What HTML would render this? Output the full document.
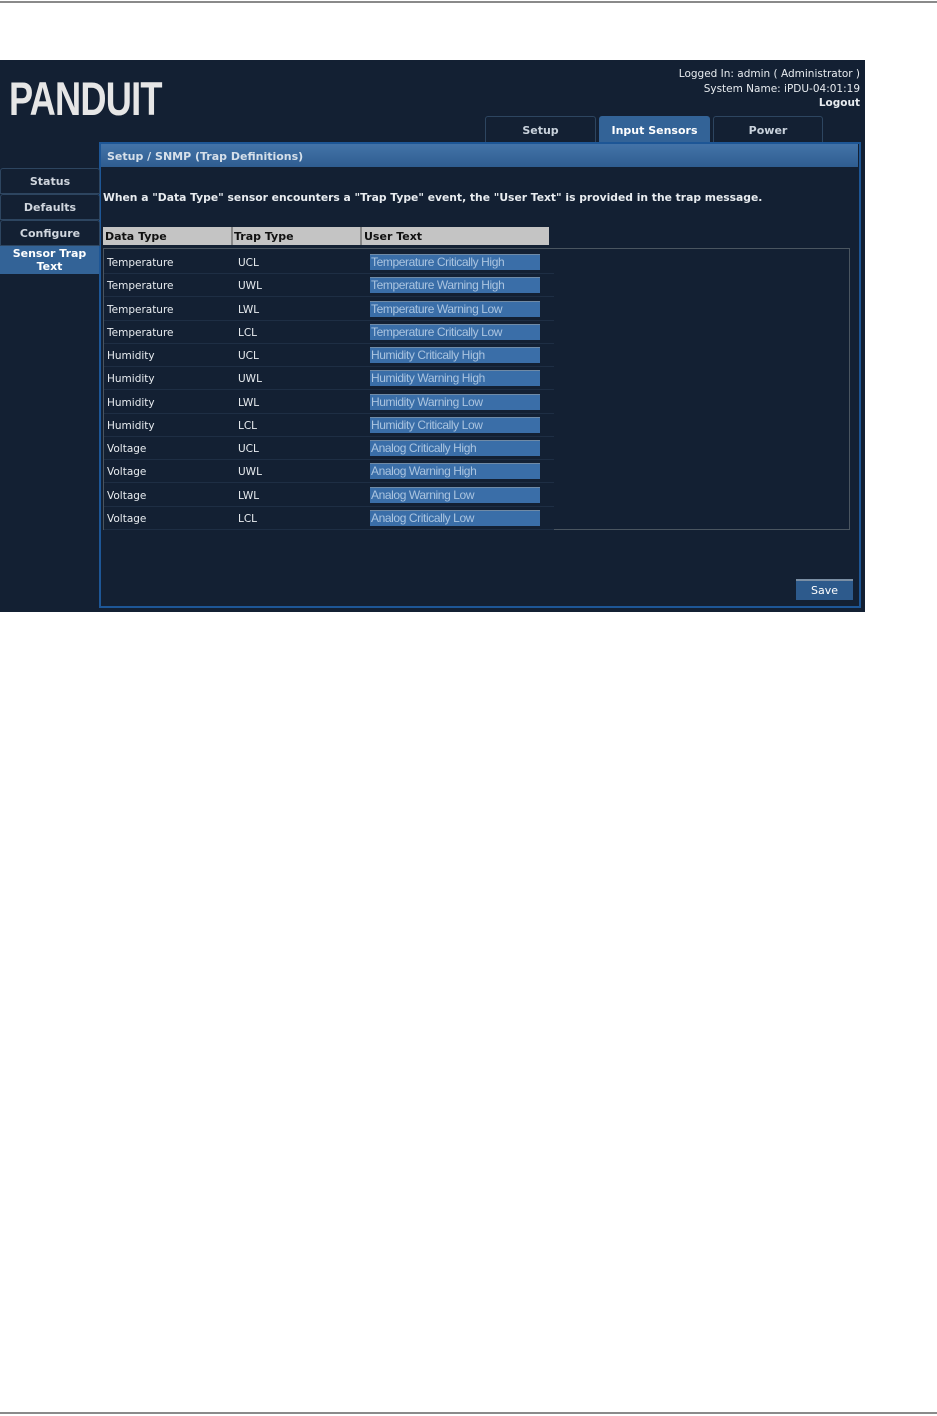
<!DOCTYPE html>
<html><head><style>
body{margin:0;width:937px;height:1416px;background:#fff;position:relative;font-family:"DejaVu Sans","Liberation Sans",sans-serif;overflow:hidden}
.a{position:absolute}
#app{left:0;top:60px;width:865px;height:552px;background:#132033}
.tab{position:absolute;top:116px;height:25px;border:1px solid #2d4560;border-radius:3px 3px 0 0;background:#132033;color:#c9d2dc;font-size:11px;font-weight:bold;text-align:center;line-height:27px}
.nav{position:absolute;left:0;width:98px;height:24px;border:1px solid #2d4560;border-radius:3px 3px 0 0;background:#132033;color:#d0d6de;font-size:11px;font-weight:bold;text-align:center;line-height:25px}
.row{position:absolute;left:104px;width:450px;height:23px;border-bottom:1px solid #1e2e44;font-size:10.5px;color:#e8ecf0;line-height:27px}
.row span{position:absolute}
.inp{position:absolute;left:266px;top:4px;width:169px;height:15px;background:#3a6ea8;border-top:1px solid #6f8aa6;color:#aac4e0;font-family:"Liberation Sans",sans-serif;font-size:12px;line-height:15px;padding-left:1px;letter-spacing:-0.4px}
</style></head><body>
<div class="a" style="left:0;top:1px;width:937px;height:2px;background:#8a8a8a"></div>
<div class="a" style="left:0;top:1412px;width:937px;height:2px;background:#8a8a8a"></div>
<div id="app" class="a"></div>
<div class="a" style="left:9px;top:75px;color:#e6e6e6;font-family:'Liberation Sans',sans-serif;font-weight:bold;font-size:47px;line-height:47px;letter-spacing:-1px;transform:scaleX(0.77);transform-origin:left">PANDUIT</div>
<div class="a" style="right:77px;top:67px;text-align:right;color:#e8ecf0;font-size:10.5px;line-height:14.5px">Logged In: admin ( Administrator )<br>System Name: iPDU-04:01:19<br><b>Logout</b></div>
<div class="tab" style="left:485px;width:109px">Setup</div>
<div class="tab" style="left:599px;width:109px;background:#336397;border-color:#336397;color:#fff">Input Sensors</div>
<div class="tab" style="left:713px;width:108px">Power</div>
<div class="a" style="left:99px;top:142px;width:758px;height:462px;border:2px solid #1d5696"></div>
<div class="a" style="left:101px;top:144px;width:757px;height:23px;background:linear-gradient(#4373a8,#2f5d90);color:#d6e0ea;font-size:11px;font-weight:bold;line-height:25px;padding-left:6px;box-sizing:border-box">Setup / SNMP (Trap Definitions)</div>
<div class="nav" style="top:168px">Status</div>
<div class="nav" style="top:194px">Defaults</div>
<div class="nav" style="top:220px">Configure</div>
<div class="a" style="left:0;top:246px;width:99px;height:27px;background:#336397;color:#fff;font-size:11px;font-weight:bold;text-align:center;line-height:13px;padding-top:1px">Sensor Trap<br>Text</div>
<div class="a" style="left:103px;top:191px;color:#e8ecf0;font-size:10.75px;font-weight:bold">When a "Data Type" sensor encounters a "Trap Type" event, the "User Text" is provided in the trap message.</div>
<div class="a" style="left:103px;top:227px;width:446px;height:18px;background:#c4c4c4;font-size:11px;font-weight:bold;color:#111;line-height:20px">
<span class="a" style="left:2px">Data Type</span><span class="a" style="left:128px;top:0;width:2px;height:18px;background:#888"></span><span class="a" style="left:131px">Trap Type</span><span class="a" style="left:257px;top:0;width:2px;height:18px;background:#888"></span><span class="a" style="left:261px">User Text</span></div>
<div class="a" style="left:103px;top:248px;width:745px;height:280px;border:1px solid #4a5560"></div>
<div id="rows"></div>
<div class="a" style="left:796px;top:579px;width:57px;height:21px;background:#2d5a8c;border-top:2px solid #7a8ea4;box-sizing:border-box;color:#fff;font-size:11px;text-align:center;line-height:19px">Save</div>
<script>
var d=[["Temperature","UCL","Temperature Critically High"],["Temperature","UWL","Temperature Warning High"],["Temperature","LWL","Temperature Warning Low"],["Temperature","LCL","Temperature Critically Low"],["Humidity","UCL","Humidity Critically High"],["Humidity","UWL","Humidity Warning High"],["Humidity","LWL","Humidity Warning Low"],["Humidity","LCL","Humidity Critically Low"],["Voltage","UCL","Analog Critically High"],["Voltage","UWL","Analog Warning High"],["Voltage","LWL","Analog Warning Low"],["Voltage","LCL","Analog Critically Low"]];
var h="";d.forEach(function(r,i){var t=250+i*23.25;h+='<div class="row" style="top:'+t+'px"><span style="left:3px">'+r[0]+'</span><span style="left:134px">'+r[1]+'</span><div class="inp">'+r[2]+'</div></div>';});
document.getElementById("rows").innerHTML=h;
</script>
</body></html>
